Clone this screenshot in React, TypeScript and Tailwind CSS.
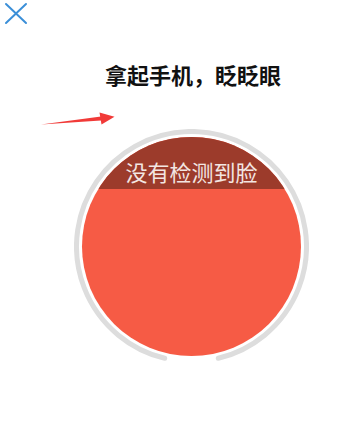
import React from 'react';

const CloseIcon = () => (
  <svg width="24" height="24" viewBox="0 0 24 24" className="block">
    <path d="M2 2 L22 21 M22 2 L2 21" stroke="#3b8fd8" strokeWidth="2" strokeLinecap="round" fill="none" />
  </svg>
);

const Arrow = () => (
  <svg width="82" height="20" viewBox="0 0 82 20" className="absolute left-[36px] top-[108px]">
    <polygon points="5,16.5 65,8.4 65,12.4" fill="#f13a38" />
    <polygon points="63.5,4.4 78.5,8.8 65.5,16.6" fill="#f13a38" />
  </svg>
);

const Ring = () => (
  <svg width="235" height="235" viewBox="0 0 235 235" className="absolute inset-0">
    <path
      d="M 90.7 229.3 A 115 115 0 1 1 144.3 229.3"
      stroke="#dddddd"
      strokeWidth="5"
      strokeLinecap="round"
      fill="none"
    />
  </svg>
);

export default function App() {
  return (
    <div
      className="relative w-[350px] h-[422px] overflow-hidden bg-white"
      style={{ fontFamily: '"Noto Sans CJK SC", "Noto Sans", sans-serif' }}
    >
      <div className="pl-[4px] pt-[2px] h-[28px]">
        <CloseIcon />
      </div>

      <h1 className="mt-[32px] ml-[105px] text-[22px] leading-[28px] font-bold text-[#111]">
        拿起手机，眨眨眼
      </h1>

      <Arrow />

      <div className="relative mt-[41px] ml-[74px] w-[235px] h-[235px] p-[8px]">
        <Ring />
        <div className="relative w-[219px] h-[219px] rounded-full overflow-hidden bg-[#f65b45]">
          <div className="h-[52px] bg-[#9c3b2b] pt-[20px] text-center text-[22px] leading-[28px] text-[#f3e6e2]">
            没有检测到脸
          </div>
        </div>
      </div>
    </div>
  );
}
